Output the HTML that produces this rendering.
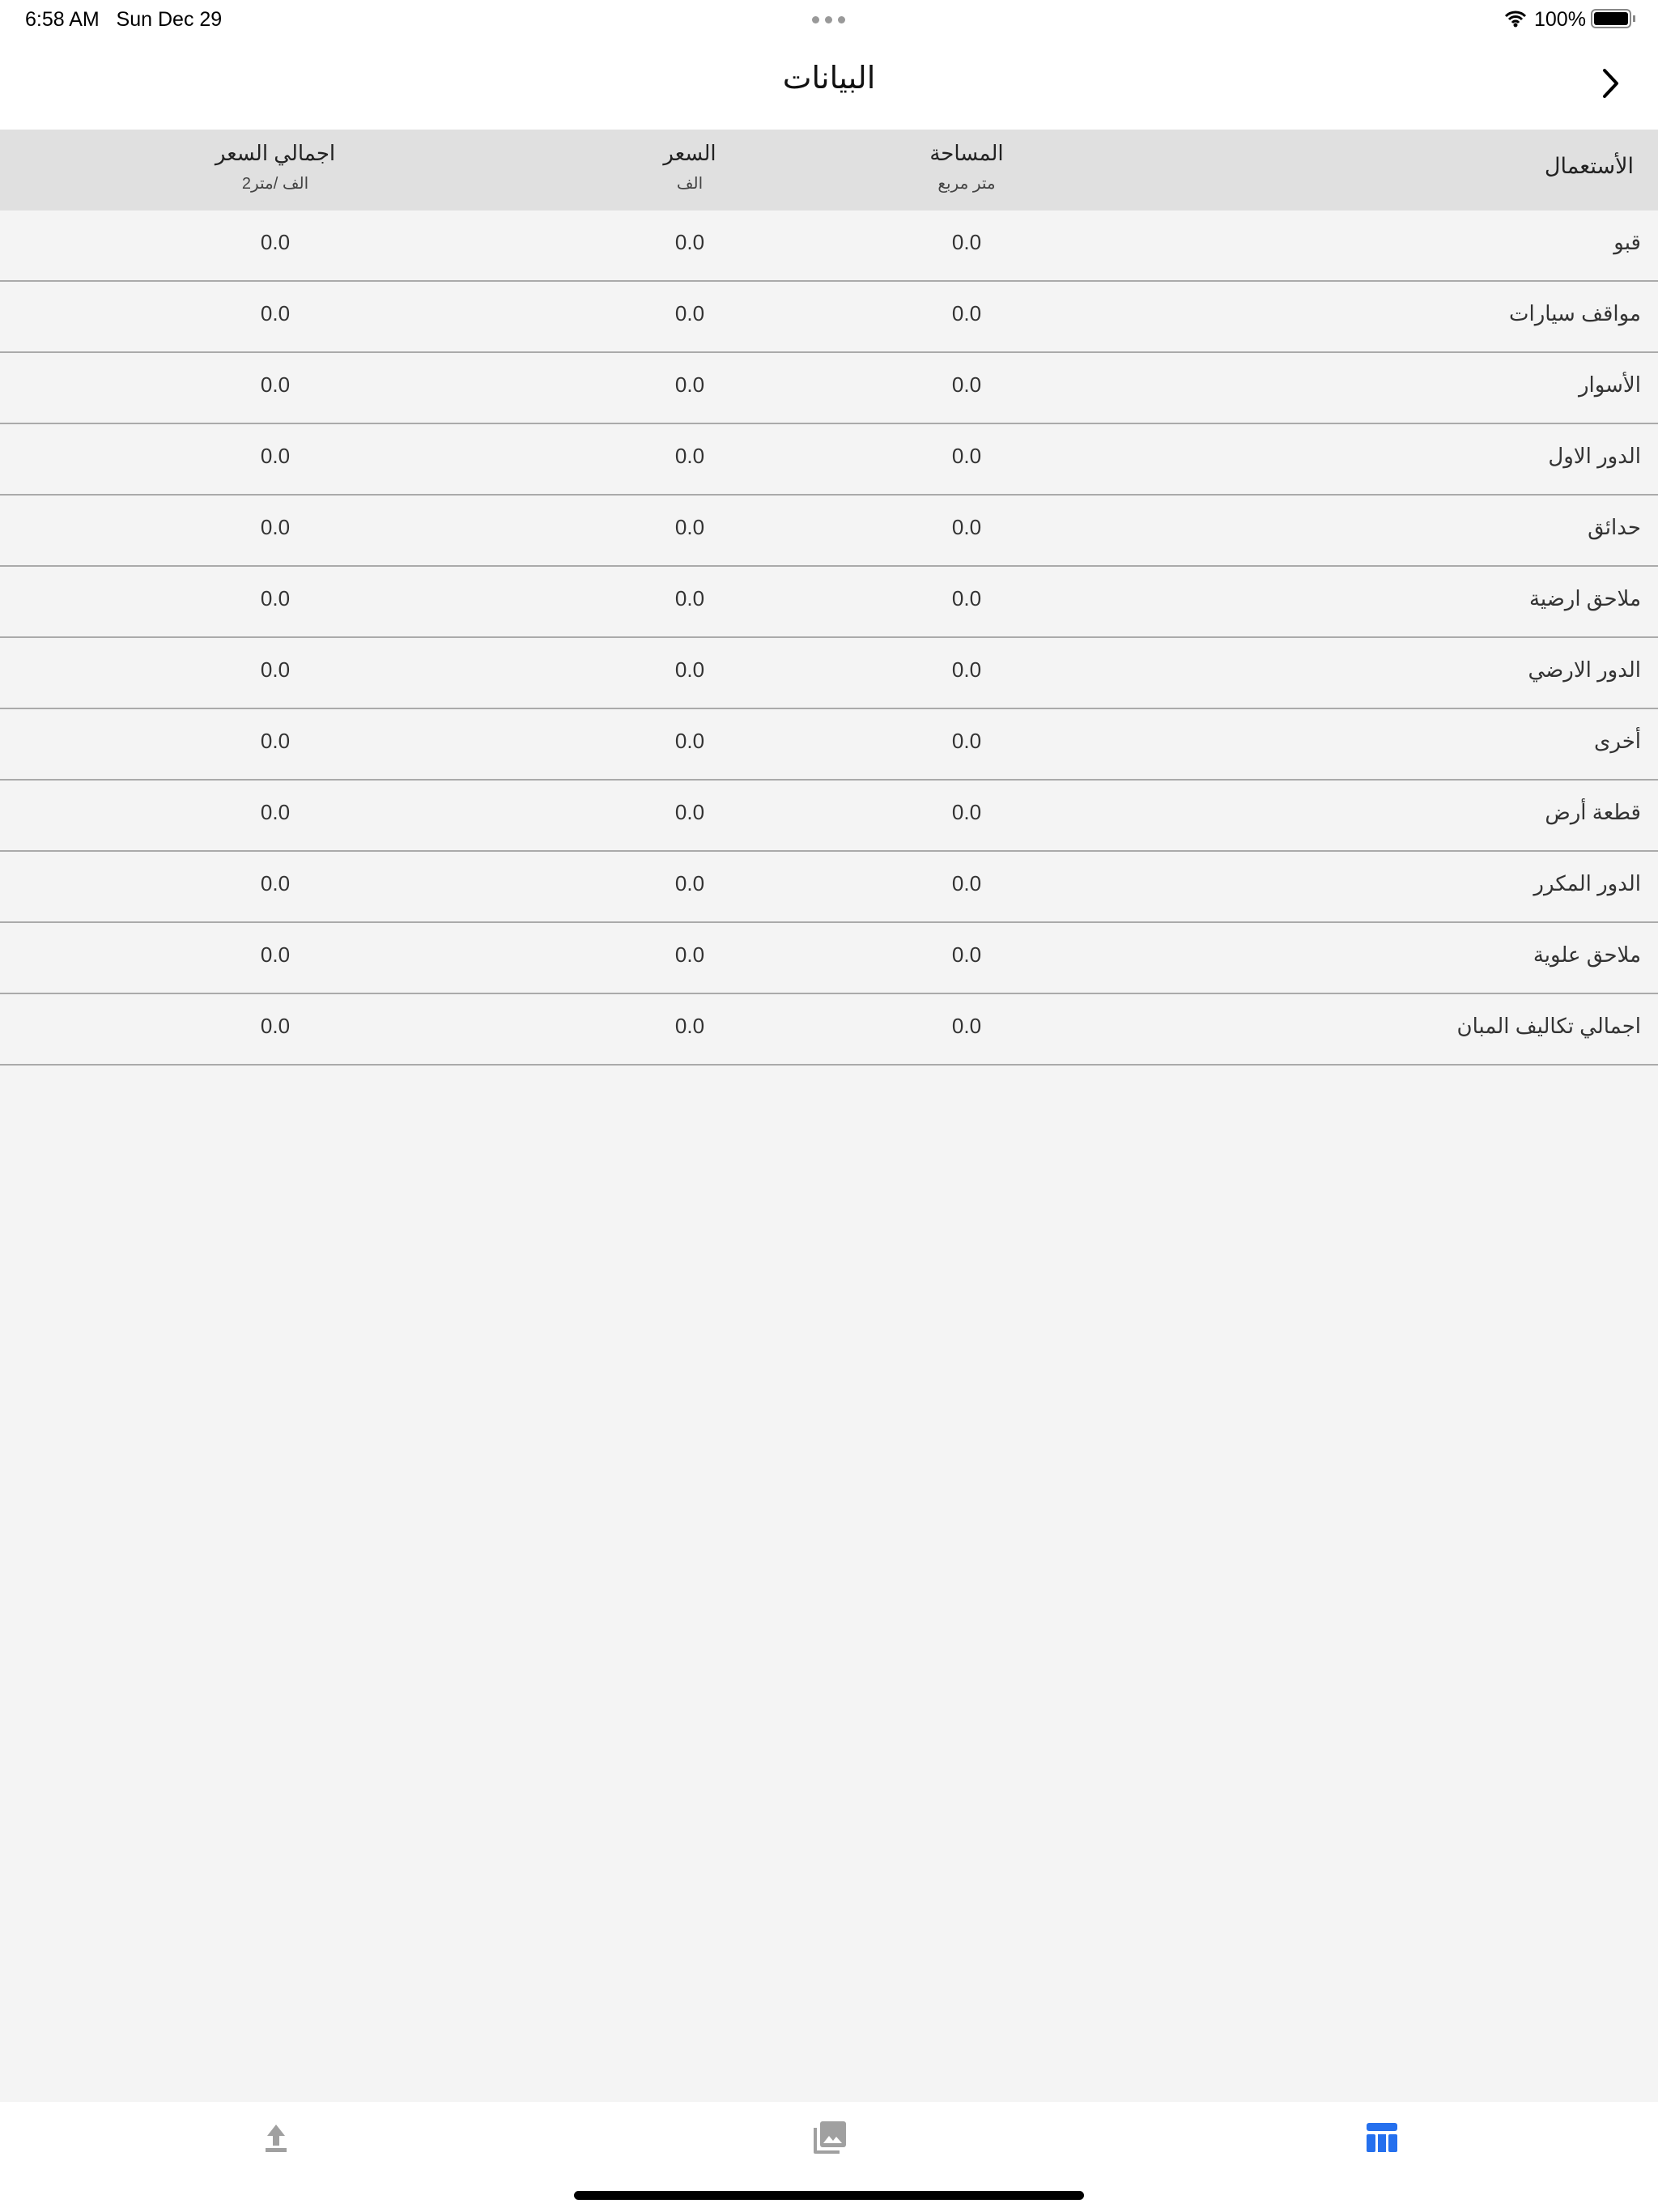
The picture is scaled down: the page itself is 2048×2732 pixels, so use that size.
<!DOCTYPE html>
<html><head><meta charset="utf-8"><style>
*{margin:0;padding:0;box-sizing:border-box}
body{width:2048px;height:2732px;background:#f4f4f4;font-family:"Liberation Sans","DejaVu Sans",sans-serif;position:relative;overflow:hidden;color:#222}
.top{position:absolute;left:0;top:0;width:2048px;height:160px;background:#fff}
.st{position:absolute;top:10px;font-size:25px;color:#000}
.title{position:absolute;top:74px;left:0;width:2048px;text-align:center;font-size:38px;color:#111}
.hdr{position:absolute;top:160px;left:0;width:2048px;height:100px;background:#e0e0e0}
.c{position:absolute;text-align:center;width:300px;margin-left:-150px}
.h1{font-size:26px;top:14px}
.h2{font-size:20px;top:54px;color:#444}
.row{position:absolute;left:0;width:2048px;height:88px;border-bottom:2px solid #aaa}
.row .c,.row .l{top:24px;font-size:26px;color:#333}
.l{position:absolute;right:21px;text-align:right;direction:rtl}
.tab{position:absolute;left:0;top:2596px;width:2048px;height:136px;background:#fff}
</style></head><body>
<div class="top">
<div class="st" style="left:31px">6:58 AM&nbsp;&nbsp;&nbsp;Sun Dec 29</div>
<div style="position:absolute;left:1003px;top:20px;width:42px;height:9px">
<span style="position:absolute;left:0;width:9px;height:9px;border-radius:50%;background:#999"></span>
<span style="position:absolute;left:16px;width:9px;height:9px;border-radius:50%;background:#999"></span>
<span style="position:absolute;left:32px;width:9px;height:9px;border-radius:50%;background:#999"></span></div>
<svg style="position:absolute;left:1858px;top:12px" width="28" height="22" viewBox="0 0 28 22"><path d="M2 8a17 17 0 0 1 24 0M6 12a11 11 0 0 1 16 0M10 16a5 5 0 0 1 8 0" stroke="#000" stroke-width="3" fill="none"/><circle cx="14" cy="19" r="2.5"/></svg>
<div class="st" style="left:1895px">100%</div>
<div style="position:absolute;left:1965px;top:11px;width:50px;height:24px;border:2px solid #888;border-radius:6px;padding:2px"><div style="width:100%;height:100%;background:#000;border-radius:3px"></div></div>
<div style="position:absolute;left:2017px;top:19px;width:3px;height:8px;background:#888"></div>
<div class="title" dir="rtl">البيانات</div>
<svg style="position:absolute;left:1978px;top:83px" width="24" height="40" viewBox="0 0 24 40"><path d="M4 4l15 16-15 16" stroke="#000" stroke-width="4" fill="none" stroke-linecap="round" stroke-linejoin="round"/></svg>
</div>
<div class="hdr">
<div class="c h1" style="left:340px" dir="rtl">اجمالي السعر</div><div class="c h2" style="left:340px" dir="rtl">الف /متر2</div>
<div class="c h1" style="left:852px" dir="rtl">السعر</div><div class="c h2" style="left:852px" dir="rtl">الف</div>
<div class="c h1" style="left:1194px" dir="rtl">المساحة</div><div class="c h2" style="left:1194px" dir="rtl">متر مربع</div>
<div class="l" style="top:30px;font-size:27px;right:30px">الأستعمال</div>
</div>
<div class="row" style="top:260px"><div class="c" style="left:340px">0.0</div><div class="c" style="left:852px">0.0</div><div class="c" style="left:1194px">0.0</div><div class="l">قبو</div></div>
<div class="row" style="top:348px"><div class="c" style="left:340px">0.0</div><div class="c" style="left:852px">0.0</div><div class="c" style="left:1194px">0.0</div><div class="l">مواقف سيارات</div></div>
<div class="row" style="top:436px"><div class="c" style="left:340px">0.0</div><div class="c" style="left:852px">0.0</div><div class="c" style="left:1194px">0.0</div><div class="l">الأسوار</div></div>
<div class="row" style="top:524px"><div class="c" style="left:340px">0.0</div><div class="c" style="left:852px">0.0</div><div class="c" style="left:1194px">0.0</div><div class="l">الدور الاول</div></div>
<div class="row" style="top:612px"><div class="c" style="left:340px">0.0</div><div class="c" style="left:852px">0.0</div><div class="c" style="left:1194px">0.0</div><div class="l">حدائق</div></div>
<div class="row" style="top:700px"><div class="c" style="left:340px">0.0</div><div class="c" style="left:852px">0.0</div><div class="c" style="left:1194px">0.0</div><div class="l">ملاحق ارضية</div></div>
<div class="row" style="top:788px"><div class="c" style="left:340px">0.0</div><div class="c" style="left:852px">0.0</div><div class="c" style="left:1194px">0.0</div><div class="l">الدور الارضي</div></div>
<div class="row" style="top:876px"><div class="c" style="left:340px">0.0</div><div class="c" style="left:852px">0.0</div><div class="c" style="left:1194px">0.0</div><div class="l">أخرى</div></div>
<div class="row" style="top:964px"><div class="c" style="left:340px">0.0</div><div class="c" style="left:852px">0.0</div><div class="c" style="left:1194px">0.0</div><div class="l">قطعة أرض</div></div>
<div class="row" style="top:1052px"><div class="c" style="left:340px">0.0</div><div class="c" style="left:852px">0.0</div><div class="c" style="left:1194px">0.0</div><div class="l">الدور المكرر</div></div>
<div class="row" style="top:1140px"><div class="c" style="left:340px">0.0</div><div class="c" style="left:852px">0.0</div><div class="c" style="left:1194px">0.0</div><div class="l">ملاحق علوية</div></div>
<div class="row" style="top:1228px"><div class="c" style="left:340px">0.0</div><div class="c" style="left:852px">0.0</div><div class="c" style="left:1194px">0.0</div><div class="l">اجمالي تكاليف المبان</div></div>
<div class="tab">
<svg style="position:absolute;left:326px;top:26px" width="30" height="36" viewBox="0 0 30 36"><path d="M15 2L4 16h7v12h8V16h7z" fill="#a0a0a0"/><rect x="2" y="31" width="26" height="5" fill="#a0a0a0"/></svg>
<svg style="position:absolute;left:1003px;top:24px" width="42" height="42" viewBox="0 0 42 42"><path d="M2 8v30a2 2 0 0 0 2 2h30v-4H6V8z" fill="#a0a0a0"/><rect x="10" y="0" width="32" height="32" rx="3" fill="#a0a0a0"/><path d="M14 27l7-9 5 6 4-5 7 8z" fill="#fff"/></svg>
<svg style="position:absolute;left:1688px;top:26px" width="38" height="36" viewBox="0 0 38 36"><rect x="0" y="0" width="38" height="10" rx="3" fill="#2570ee"/><rect x="0" y="14" width="11" height="22" rx="2" fill="#2570ee"/><rect x="14" y="14" width="10" height="22" fill="#2570ee"/><rect x="27" y="14" width="11" height="22" rx="2" fill="#2570ee"/></svg>
<div style="position:absolute;left:709px;top:110px;width:630px;height:11px;border-radius:6px;background:#000"></div>
</div>
</body></html>
